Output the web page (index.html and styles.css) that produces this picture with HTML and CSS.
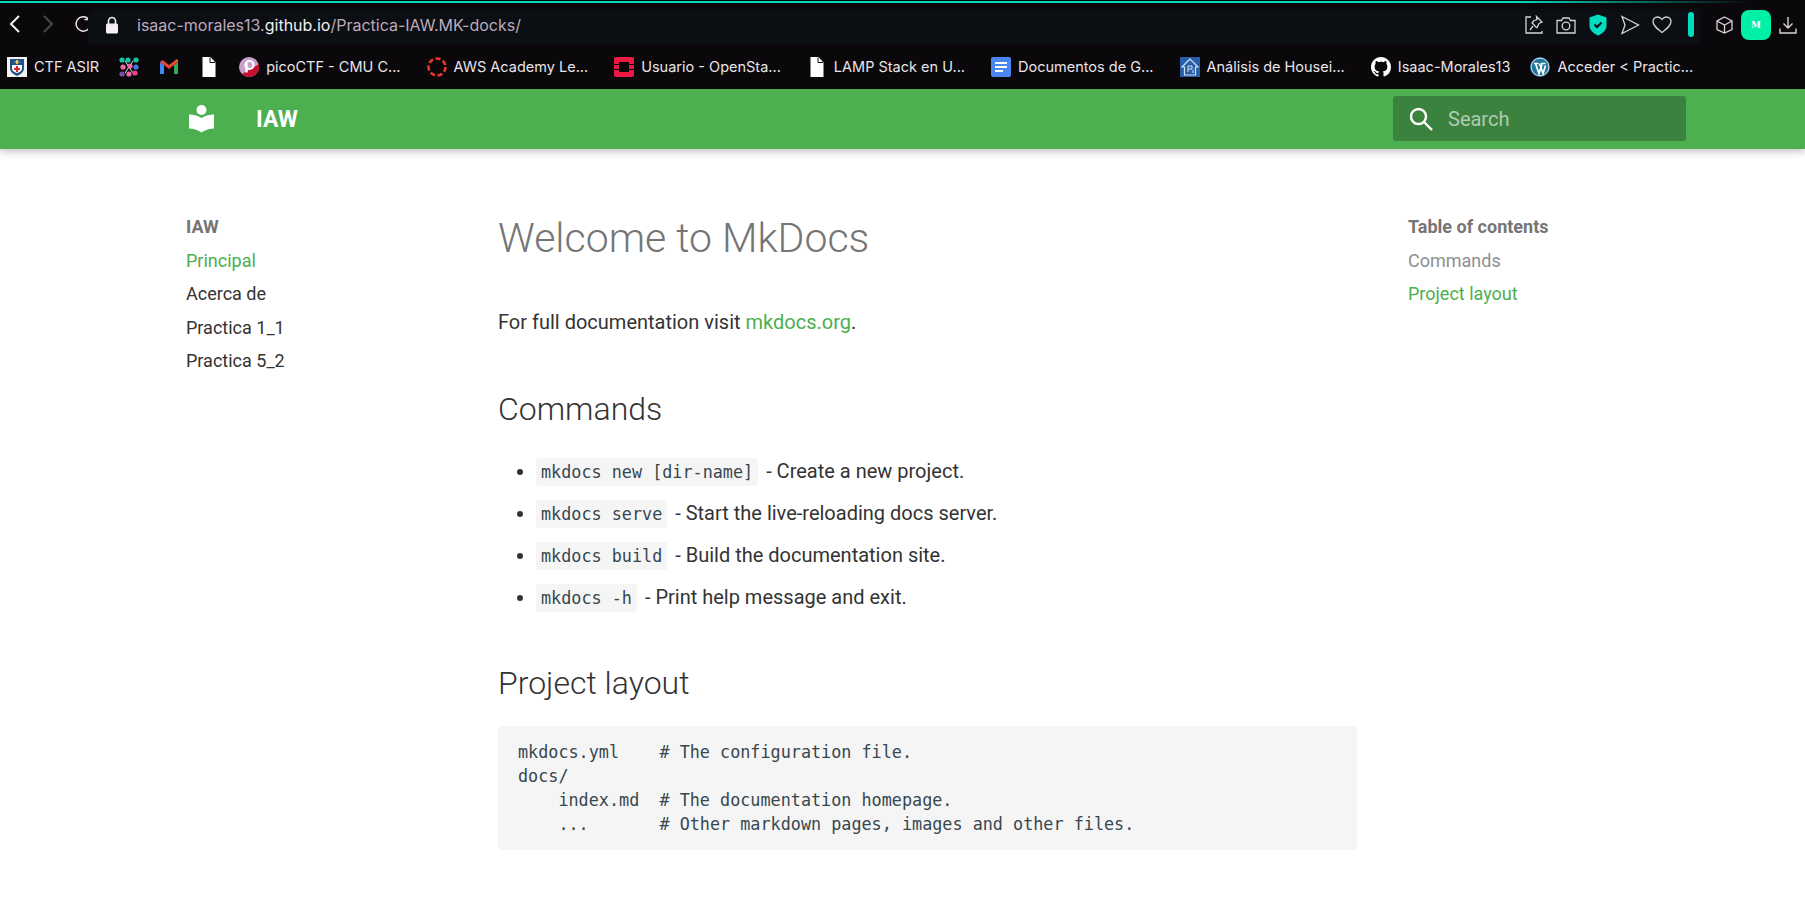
FILE: index.html
```html
<!DOCTYPE html>
<html lang="en">
<head>
  <meta charset="UTF-8" />
  <title>Welcome to MkDocs - IAW</title>
  <link rel="stylesheet" href="styles.css">
</head>
<body>
  <div class="loadline"></div>

  <div class="toolbar">
    <div class="navbtns">
      <svg width="16" height="22" viewBox="0 0 16 22"><path d="M12 3 4 11l8 8" fill="none" stroke="#f4f0f4" stroke-width="2"/></svg>
      <svg width="16" height="22" viewBox="0 0 16 22"><path d="M4 3l8 8-8 8" fill="none" stroke="#4c494c" stroke-width="2"/></svg>
      <svg width="20" height="20" viewBox="0 0 20 20"><path d="M15.5 5A7.2 7.2 0 1 0 17.400 11" fill="none" stroke="#e8e4e8" stroke-width="1.500"/><path d="M11.500 5.600h5v-5" fill="none" stroke="#e8e4e8" stroke-width="1.500"/></svg>
    </div>
    <div class="addressbar">
      <svg class="lock" width="14" height="18" viewBox="0 0 14 18"><path d="M3.500 8V5a3.500 3.500 0 0 1 7 0v3" fill="none" stroke="#f5f0f5" stroke-width="1.600"/><rect x="1" y="7.500" width="12" height="10" rx="1.500" fill="#f5f0f5"/></svg>
      <span class="url">isaac-morales13.<b>github.io</b>/Practica-IAW.MK-docks/</span>
      <div class="addr-icons">
        <svg width="20" height="20" viewBox="0 0 20 20" fill="none" stroke="#d8d4d8" stroke-width="1.300"><path d="M7 2H2v16h16v-2"/><path d="M12.500 1.500 18 7l-3 1.500-2 4-1.500-.8-1.500-2-2-1.700 2-2.500 3-1z"/><path d="M9 11l-3 4"/></svg>
        <svg width="20" height="20" viewBox="0 0 20 20" fill="none" stroke="#d8d4d8" stroke-width="1.300"><path d="M1 5.500h4.500L7 3h6l1.500 2.500H19V18H1z"/><circle cx="10" cy="11" r="3.800"/></svg>
        <svg width="20" height="24" viewBox="0 0 20 24"><path d="M10 1.500 18.500 4.500V13c0 4-4 7.500-8.500 9.500C5.500 20.500 1.500 17 1.500 13V4.500z" fill="#00dcc0"/><path d="M6.500 11.500 9 14l4.500-4.500" fill="none" stroke="#0b0e12" stroke-width="2"/></svg>
        <svg width="20" height="20" viewBox="0 0 20 20"><path d="M2 1.500 18.500 10 2 18.500 5 10z" fill="none" stroke="#d8d4d8" stroke-width="1.300"/></svg>
        <svg width="20" height="18" viewBox="0 0 20 18"><path d="M10 16.500C5 12.500 1 9.500 1 5.500 1 3 3 1 5.500 1 7.500 1 9 2 10 3.500 11 2 12.500 1 14.500 1 17 1 19 3 19 5.500 19 9.500 15 12.500 10 16.500z" fill="none" stroke="#d8d4d8" stroke-width="1.300"/></svg>
        <span class="tealbar"></span>
      </div>
    </div>
    <div class="ext-icons">
      <svg width="17" height="18" viewBox="0 0 17 18" fill="none" stroke="#d8d4d8" stroke-width="1.300"><path d="M8.500 1 16 5v8.500L8.500 17 1 13.500V5z"/><path d="M1 5l7.500 4L16 5M8.500 9v8"/></svg>
      <span class="mbox">M</span>
      <svg width="18" height="18" viewBox="0 0 18 18" fill="none" stroke="#d8d4d8" stroke-width="1.400"><path d="M9 1v11M4.500 7.500 9 12l4.500-4.500M1 12.500V17h16v-4.500"/></svg>
    </div>
  </div>

  <div class="bookmarks">
    <a class="bm">
      <svg width="20" height="20" viewBox="0 0 20 20"><rect width="20" height="20" fill="#f2f2f2"/><path d="M3 2h14v9c0 4-3 6-7 8-4-2-7-4-7-8z" fill="#24508c"/><path d="M5 8h10v3c0 3-2 4-5 5-3-1-5-2-5-5z" fill="#fff"/><path d="M9 9h2v2h2v2h-2v2H9v-2H7v-2h2z" fill="#d8232a"/><path d="M9 3h2v1.500h1.500v1H11V7H9V5.500H7.500v-1H9z" fill="#e6c84a"/></svg>
      <span class="bm-label">CTF ASIR</span>
    </a>
    <a class="bm">
      <svg width="20" height="20" viewBox="0 0 20 20"><path d="M6 4l8 12M14 4 6 16" stroke="#e8e4e8" stroke-width="1"/><circle cx="3" cy="3" r="2.600" fill="#12c79e"/><circle cx="9" cy="3" r="2.600" fill="#12c79e"/><circle cx="17" cy="3" r="2.600" fill="#12c79e"/><circle cx="4" cy="10" r="2.600" fill="#f06aa8"/><circle cx="11" cy="9" r="2.600" fill="#f06aa8"/><circle cx="17" cy="10" r="2.600" fill="#3f7be0"/><circle cx="3" cy="17" r="2.600" fill="#7e4fa8"/><circle cx="10" cy="17" r="2.600" fill="#f06aa8"/><circle cx="16" cy="16" r="2.600" fill="#f0418a"/></svg>
    </a>
    <a class="bm">
      <svg width="20" height="20" viewBox="0 0 20 20"><path d="M1 5v12h4V8z" fill="#4285f4"/><path d="M15 8v9h4V5z" fill="#34a853"/><path d="M1 5 10 12 19 5 16.500 3 10 8 3.500 3z" fill="#ea4335"/><path d="M16.500 3 19 5V4.500C19 3 17.500 2 16.500 3z" fill="#fbbc04"/></svg>
    </a>
    <a class="bm">
      <svg class="doc" width="20" height="20" viewBox="0 0 20 20"><path d="M3.500 0h8l5 5.500V20h-13z" fill="#fff"/><path d="M11 .500v5h5" fill="none" stroke="#0b080c" stroke-width="1"/></svg>
    </a>
    <a class="bm">
      <svg width="20" height="20" viewBox="0 0 20 20"><circle cx="10" cy="10" r="10" fill="#c9a0c9"/><path d="M20 10a10 10 0 0 1-17 7L20 7z" fill="#c8102e"/><circle cx="10.500" cy="8" r="4" fill="none" stroke="#fff" stroke-width="2.200"/><path d="M7.500 6v9.500" stroke="#fff" stroke-width="2.200"/></svg>
      <span class="bm-label cut">picoCTF - CMU C...</span>
    </a>
    <a class="bm">
      <svg width="20" height="20" viewBox="0 0 20 20"><circle cx="10" cy="10" r="8.500" fill="none" stroke="#ea3a26" stroke-width="2.600" stroke-dasharray="5 2.670"/></svg>
      <span class="bm-label cut">AWS Academy Le...</span>
    </a>
    <a class="bm">
      <svg width="20" height="20" viewBox="0 0 20 20"><path d="M2 0h16a2 2 0 0 1 2 2v16a2 2 0 0 1-2 2H2a2 2 0 0 1-2-2V2a2 2 0 0 1 2-2zM5 5v10h10V5z" fill="#ed1944" fill-rule="evenodd"/><path d="M0 7h5v1H0zM15 7h5v1h-5zM0 12h5v1H0zM15 12h5v1h-5z" fill="#0b080c"/></svg>
      <span class="bm-label cut">Usuario - OpenSta...</span>
    </a>
    <a class="bm">
      <svg class="doc" width="20" height="20" viewBox="0 0 20 20"><path d="M3.500 0h8l5 5.500V20h-13z" fill="#fff"/><path d="M11 .500v5h5" fill="none" stroke="#0b080c" stroke-width="1"/></svg>
      <span class="bm-label cut">LAMP Stack en U...</span>
    </a>
    <a class="bm">
      <svg width="20" height="20" viewBox="0 0 20 20"><rect width="20" height="20" rx="2" fill="#4a86f0"/><path d="M4 5h12v2H4zM4 9h12v2H4zM4 13h8v2H4z" fill="#fff"/></svg>
      <span class="bm-label cut">Documentos de G...</span>
    </a>
    <a class="bm">
      <svg width="20" height="20" viewBox="0 0 20 20"><rect width="20" height="20" fill="#2a5ea8"/><path d="M10 2 2 10h2.500v8h11v-8H18z" fill="none" stroke="#cfe0f2" stroke-width="1.200"/><path d="M8 9v6M8 9h4v3H8M13 13v3" fill="none" stroke="#cfe0f2" stroke-width="1"/></svg>
      <span class="bm-label cut">Análisis de Housei...</span>
    </a>
    <a class="bm">
      <svg width="20" height="20" viewBox="0 0 16 16"><path fill="#fff" d="M8 0C3.580 0 0 3.580 0 8c0 3.540 2.290 6.530 5.470 7.590.4.070.55-.17.55-.38 0-.19-.01-.82-.01-1.490-2.010.37-2.530-.49-2.690-.94-.09-.23-.48-.94-.82-1.130-.28-.15-.68-.52-.01-.53.63-.01 1.080.58 1.230.82.720 1.210 1.870.87 2.330.66.070-.52.280-.87.510-1.070-1.780-.2-3.640-.89-3.640-3.950 0-.87.310-1.590.82-2.150-.08-.2-.36-1.020.08-2.120 0 0 .67-.21 2.200.82.640-.18 1.320-.27 2-.27.680 0 1.360.09 2 .27 1.530-1.040 2.200-.82 2.200-.82.440 1.100.160 1.920.080 2.120.510.560.820 1.270.820 2.150 0 3.070-1.870 3.750-3.650 3.950.290.250.540.730.540 1.480 0 1.070-.01 1.930-.01 2.200 0 .210.150.460.550.380A8.013 8.013 0 0 0 16 8c0-4.420-3.580-8-8-8z"/></svg>
      <span class="bm-label">Isaac-Morales13</span>
    </a>
    <a class="bm">
      <svg width="20" height="20" viewBox="0 0 20 20"><circle cx="10" cy="10" r="10" fill="#21759b"/><circle cx="10" cy="10" r="8.800" fill="none" stroke="#fff" stroke-width=".8"/><path d="M4 6.500h4.500M11 6.500h4.500M5.500 6.500 9 16.500l3-9M9.500 6.500l3.500 10 2.500-8" fill="none" stroke="#fff" stroke-width="1.700"/></svg>
      <span class="bm-label cut">Acceder &lt; Practic...</span>
    </a>
  </div>

  <header class="site-header">
    <div class="brand">
      <svg class="brand-logo" width="31" height="30" viewBox="0 0 31 30"><circle cx="15.500" cy="6" r="5" fill="#fff"/><path d="M15.500 14C12 11.500 6 10.500 3 10.500v14c4 0 9 1.500 12.500 4 3.500-2.500 8.500-4 12.500-4v-14c-3 0-9 1-12.500 3.500z" fill="#fff"/></svg>
      <span class="brand-name">IAW</span>
    </div>
    <div class="search">
      <svg width="26" height="26" viewBox="0 0 26 26"><circle cx="10.500" cy="10.500" r="7.500" fill="none" stroke="#fff" stroke-width="2.400"/><path d="M16 16l8 8" stroke="#fff" stroke-width="2.400"/></svg>
      <span class="search-text">Search</span>
    </div>
  </header>

  <div class="page">
    <nav class="sidenav">
      <div class="nav-title">IAW</div>
      <a class="nav-link active">Principal</a>
      <a class="nav-link">Acerca de</a>
      <a class="nav-link">Practica 1_1</a>
      <a class="nav-link">Practica 5_2</a>
    </nav>

    <main class="content">
      <h1>Welcome to MkDocs</h1>
      <p>For full documentation visit <a class="link">mkdocs.org</a>.</p>
      <h2 class="cmd-head">Commands</h2>
      <ul>
        <li><code>mkdocs new [dir-name]</code> - Create a new project.</li>
        <li><code>mkdocs serve</code> - Start the live-reloading docs server.</li>
        <li><code>mkdocs build</code> - Build the documentation site.</li>
        <li><code>mkdocs -h</code> - Print help message and exit.</li>
      </ul>
      <h2 class="layout-head">Project layout</h2>
      <pre>mkdocs.yml    # The configuration file.
docs/
    index.md  # The documentation homepage.
    ...       # Other markdown pages, images and other files.</pre>
    </main>

    <aside class="toc">
      <div class="nav-title">Table of contents</div>
      <a class="toc-link">Commands</a>
      <a class="toc-link active">Project layout</a>
    </aside>
  </div>
</body>
</html>
```

FILE: styles.css
```css
* {
  box-sizing: border-box;
}

html, body {
  height: 100%;
}

body {
  margin: 0;
  background: #fff;
  font-family: Roboto, "Liberation Sans", sans-serif;
  color: #333;
  overflow: hidden;
}

/* browser chrome */
.loadline {
  height: 3px;
  border-top: 1px solid #0b080c;
  background: linear-gradient(to right, #00dcc0 0, #00dcc0 84%, #0b080c 97%);
}

.toolbar {
  height: 41px;
  background: #0b080c;
  display: flex;
  padding-top: 6px;
}

.navbtns {
  width: 102px;
  padding: 0 0 6px 7px;
  display: flex;
  align-items: center;
  gap: 17px;
}

.addressbar {
  flex: 1;
  background: #0b0e12;
  border-radius: 6px 0 0 0;
  display: flex;
  align-items: center;
  padding: 0 6px 4px 17px;
  margin-left: -14px;
}

.lock {
  margin-right: 18px;
}

.url {
  font-family: Inter, sans-serif;
  font-size: 16px;
  color: #bdaabd;
  white-space: nowrap;
}

.url b {
  font-weight: 400;
  color: #f2eef2;
}

.addr-icons {
  margin-left: auto;
  display: flex;
  align-items: center;
  gap: 12px;
}

.tealbar {
  width: 6px;
  height: 25px;
  border-radius: 3px;
  background: #00dcc0;
  margin-left: 4px;
}

.ext-icons {
  width: 105px;
  display: flex;
  align-items: center;
  justify-content: flex-end;
  gap: 8px;
  padding: 0 8px 4px 0;
}

.mbox {
  width: 30px;
  height: 30px;
  border-radius: 8px;
  background: #00f0a8;
  color: #fff;
  font-family: "DejaVu Serif", serif;
  font-size: 9px;
  font-weight: 700;
  display: flex;
  align-items: center;
  justify-content: center;
}

.bookmarks {
  height: 45px;
  background: #0b080c;
  display: flex;
  align-items: center;
  gap: 20px;
  padding: 0 0 0 7px;
}

.bm {
  display: flex;
  align-items: center;
  gap: 7px;
}

.bm-label {
  font-family: Inter, sans-serif;
  font-size: 14.500px;
  color: #e8e4e8;
  white-space: nowrap;
}

.bm-label.cut {
  margin-right: 6px;
}

/* site header */
.site-header {
  height: 60px;
  background: #4caf50;
  box-shadow: 0 2px 8px rgba(0, 0, 0, .28);
  display: flex;
  align-items: center;
  justify-content: space-between;
  padding: 0 119px 0 186px;
  position: relative;
}

.brand {
  display: flex;
  align-items: center;
  gap: 39px;
}

.brand-name {
  color: #fff;
  font-size: 23px;
  font-weight: 700;
}

.search {
  width: 293px;
  height: 45px;
  margin-top: -1px;
  background: #3b823e;
  border-radius: 3px;
  display: flex;
  align-items: center;
  gap: 14px;
  padding-left: 15px;
}

.search-text {
  color: rgba(255, 255, 255, .6);
  font-size: 20px;
}

/* page */
.page {
  display: flex;
  padding: 0 119px 0 186px;
}

.sidenav {
  width: 312px;
  padding-top: 61px;
  flex: none;
}

.nav-title {
  font-size: 18px;
  font-weight: 700;
  line-height: 33.600px;
  color: #757575;
}

.nav-link, .toc-link {
  display: block;
  font-size: 18px;
  line-height: 33.600px;
  color: #333;
}

.nav-link.active, .toc-link.active, .link {
  color: #4caf50;
}

.toc-link {
  color: #8f8f8f;
}

.toc-link.active {
  color: #4caf50;
}

.content {
  width: 859px;
  flex: none;
  padding-top: 62px;
}

h1 {
  margin: 0;
  font-size: 41px;
  font-weight: 300;
  line-height: 54px;
  color: #757575;
}

p {
  margin: 41px 0 0;
  font-size: 20px;
  line-height: 32px;
}

h2 {
  margin: 0;
  font-size: 32px;
  font-weight: 300;
  line-height: 40px;
}

.cmd-head {
  margin-top: 51px;
}

.layout-head {
  margin-top: 45px;
}

ul {
  margin: 21px 0 0;
  padding: 0 0 0 38px;
}

li {
  font-size: 20px;
  line-height: 42px;
  height: 42px;
}

code {
  font-family: "DejaVu Sans Mono", monospace;
  font-size: 16.800px;
  color: #37474f;
  background: #f5f5f5;
  border-radius: 3px;
  padding: 4px 5px;
  margin-right: 3px;
}

pre {
  margin: 23px 0 0;
  padding: 14px 20px 14px;
  background: #f5f5f5;
  border-radius: 3px;
  font-family: "DejaVu Sans Mono", monospace;
  font-size: 16.800px;
  line-height: 24px;
  color: #37474f;
}

.toc {
  margin-left: 51px;
  padding-top: 61px;
  flex: none;
  width: 278px;
}
```
